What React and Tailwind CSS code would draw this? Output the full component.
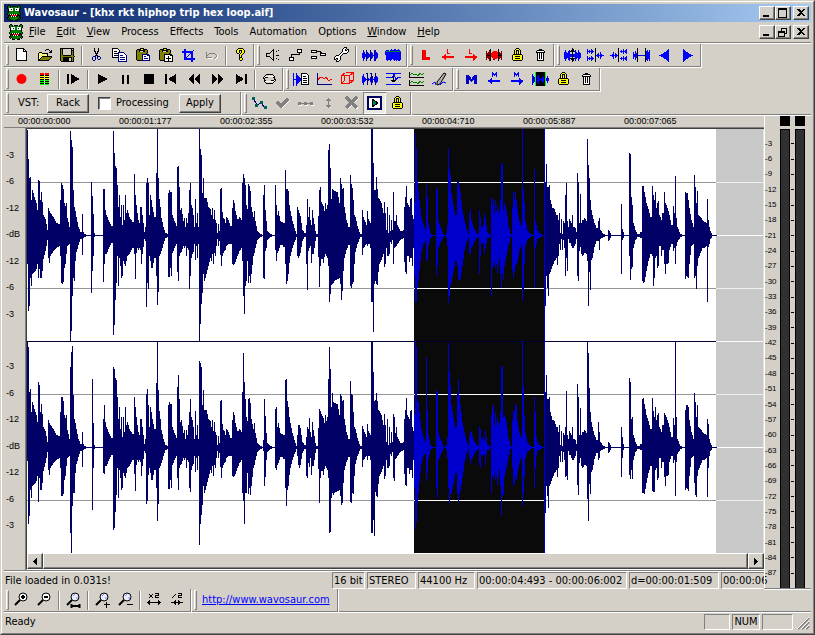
const PALETTE = {
  k: '#000000',
  w: '#ffffff',
  y: '#ffff00',
  o: '#808000',
  b: '#0000ff',
  n: '#000080',
  g: '#808080',
  r: '#ff0000',
  G: '#008000',
  L: '#00ff00',
  l: '#d4d0c8',
}

// columns of the wave form: x, height above the centre line, height below it
const LEFT =
  '27 105 28,28 76 75,29 57 70,30 58 42,31 35 50,32 45 38,34 38 36,36 32 33,37 25 28,38 55 42,39 54 33,40 35 42,41 43 42,42 33 35,43 20 23,45 16 15,47 5 4,48 27 22,49 24 27,50 22 20,53 18 15,56 12 12,59 11 10,60 35 20,61 52 47,62 50 48,63 46 46,64 32 32,65 29 28,66 32 18,67 17 10,69 8 8,70 104 106,71 95 95,72 88 60,73 45 42,74 28 45,75 24 25,76 18 16,78 8 9,80 3 3,82 21 19,83 3 2,84 1 1,86 0 0,' +
  '91 53 57,92 39 35,93 21 20,94 2 1,95 0 0,103 46 46,104 46 28,105 25 18,106 20 18,108 15 13,111 9 7,113 104 99,114 82 89,115 69 64,116 67 47,117 50 20,118 28 50,119 40 22,120 18 30,121 30 42,122 10 40,123 30 25,124 15 28,125 40 30,126 22 25,127 25 20,129 18 18,132 13 12,134 61 18,135 40 43,136 30 17,137 22 12,138 15 14,139 12 12,140 28 14,141 28 28,142 20 18,144 3 3,145 8 5,146 52 71,147 57 47,148 52 53,149 20 20,150 40 25,151 35 32,152 28 32,154 18 22,156 62 40,157 107 69,158 57 56,159 36 20,160 28 18,161 17 15,163 8 8,165 2 2,167 1 1,' +
  '168 42 41,169 45 41,170 43 32,171 43 40,172 20 17,174 14 12,176 9 8,177 68 36,178 69 45,179 48 20,180 25 17,181 27 16,183 14 10,184 17 12,185 8 10,186 17 20,187 12 12,188 22 14,189 45 53,190 52 40,191 30 22,192 27 18,193 20 16,194 8 8,195 36 24,196 12 10,197 22 22,198 8 8,199 106 107,200 86 88,201 80 68,202 42 57,203 57 38,204 37 45,206 37 38,208 28 30,210 26 22,211 20 25,212 27 18,213 16 28,214 25 17,215 15 20,216 12 10,217 2 3,218 11 10,219 4 5,' +
  '220 46 19,221 47 30,222 23 20,223 17 17,224 16 15,225 12 14,226 18 10,228 15 8,230 9 8,232 27 28,233 35 29,234 32 28,235 24 26,237 16 20,239 18 15,241 15 12,242 52 25,243 61 60,244 57 78,245 50 50,246 30 45,247 26 25,248 51 47,249 49 40,250 44 47,251 28 38,253 18 20,254 24 17,255 14 12,257 4 4,260 1 1,262 0 0,263 40 42,264 50 43,265 25 15,266 14 12,267 4 4,270 1 1,272 0 0,275 50 14,276 30 25,277 20 17,278 24 15,280 14 9,283 12 11,285 65 28,286 46 48,287 46 45,288 44 38,289 30 27,290 24 20,292 14 12,294 7 6,296 1 1,' +
  '297 28 20,298 25 22,300 19 17,302 5 5,304 2 1,306 10 28,307 36 54,308 18 15,309 28 12,310 15 10,311 10 27,312 25 18,313 17 18,315 4 5,316 1 1,318 19 21,319 45 51,320 48 30,321 33 23,323 29 27,324 24 21,325 32 18,326 26 20,327 30 22,328 85 30,329 91 66,330 67 58,331 36 49,332 46 48,334 44 45,337 43 43,339 32 42,340 57 48,341 51 64,342 46 55,343 47 35,344 28 22,346 15 14,348 8 9,350 60 50,351 51 52,352 47 48,353 35 46,354 20 28,355 18 16,357 9 8,359 3 3,360 1 1,' +
  '362 25 19,363 18 12,366 10 8,367 24 10,368 16 8,370 12 12,371 107 66,372 107 66,373 72 96,374 45 48,375 45 45,376 58 48,377 46 49,378 37 36,379 36 28,381 32 24,383 22 18,384 33 31,385 22 28,386 5 12,387 28 20,388 2 20,389 20 18,390 4 6,391 15 8,392 5 4,393 43 28,394 14 12,396 20 10,397 10 8,400 4 4,403 5 2,404 28 26,405 38 36,406 49 38,407 32 20,409 28 26,410 36 22,411 37 22,412 20 30,413 16 12,' +
  '414 33 40,415 102 66,416 87 66,417 54 52,418 45 45,419 35 34,421 18 16,423 10 8,425 5 5,426 50 24,427 38 25,428 12 10,430 2 2,432 0 0,436 47 40,437 45 30,438 14 12,440 8 7,443 1 1,444 0 0,446 2 2,447 10 10,448 87 67,449 66 60,450 60 50,451 42 46,453 30 36,455 20 25,457 54 30,458 53 44,460 42 43,462 25 30,464 15 15,466 6 6,468 1 1,469 22 18,470 26 18,471 15 12,473 8 8,476 2 2,478 1 1,479 25 38,480 18 20,481 8 7,483 10 8,484 22 18,485 17 12,487 3 2,489 1 1,490 0 0,' +
  '491 37 60,492 30 32,493 36 30,494 22 26,495 35 32,496 24 28,497 30 37,499 22 22,500 35 38,501 72 52,502 71 38,503 25 44,504 32 30,506 25 20,508 10 10,510 1 1,512 28 35,513 43 42,514 36 36,515 43 30,517 26 26,519 14 15,521 9 9,522 107 65,523 46 53,524 32 28,525 14 10,527 5 4,530 1 1,532 0 0,534 66 52,535 14 12,537 5 3,540 1 1,542 0 0,545 53 70,546 71 40,547 48 52,548 48 60,549 50 38,550 35 36,552 27 30,554 26 25,556 20 22,557 20 29,558 15 20,559 22 8,560 2 14,561 16 3,562 1 14,563 14 4,564 12 12,' +
  '565 40 40,566 52 22,567 14 35,568 8 3,569 16 7,571 12 10,572 20 12,573 8 12,575 7 8,576 3 3,577 62 40,578 53 45,579 12 15,580 41 11,581 12 18,582 15 20,584 17 17,586 14 18,587 96 25,588 70 70,589 57 36,590 35 54,591 25 24,592 20 22,594 12 11,596 7 5,598 14 5,599 17 14,600 5 3,603 1 1,605 0 0,608 5 5,609 4 4,611 0 0,621 31 38,622 6 4,624 0 0,629 82 20,630 81 44,631 38 33,632 30 31,633 12 12,635 5 4,637 1 1,640 3 2,' +
  '642 49 45,643 49 47,644 43 46,646 32 35,648 26 25,650 18 18,652 49 20,653 40 50,654 35 42,655 43 22,656 27 20,657 32 32,658 34 30,659 20 10,661 15 20,662 22 14,664 43 28,665 32 38,666 30 28,668 24 27,669 20 14,671 10 8,673 29 15,674 22 12,675 59 28,676 17 10,677 8 6,680 1 1,682 0 0,685 43 43,686 42 40,687 42 41,688 35 42,689 27 28,691 15 10,693 8 8,694 60 42,695 48 40,696 32 53,697 44 30,698 20 22,700 18 17,702 15 12,704 13 12,706 12 10,707 36 66,708 15 11,709 8 8,710 4 3,712 0 0,716 0 0'

// the right channel differs from the left one mostly at the peaks
const RIGHT =
  '27 105 13,28 100 76,29 55 68,38 65 54,39 62 30,61 50 48,70 80 85,71 95 106,72 101 58,73 52 45,82 15 19,91 0 0,92 68 62,93 24 20,103 28 25,104 42 26,113 80 82,114 78 80,134 50 26,146 53 56,147 58 53,148 42 27,156 64 40,157 106 73,177 60 30,178 72 42,189 35 40,190 48 44,199 86 97,200 84 76,201 80 67,242 55 45,243 94 53,244 65 76,245 48 45,248 48 46,263 7 3,264 48 38,265 31 29,275 38 20,276 40 22,285 67 40,286 68 58,287 46 42,288 40 38,297 12 8,298 22 17,307 20 30,309 29 19,319 38 55,320 36 30,' +
  '328 68 30,329 100 85,330 78 84,331 40 50,332 54 45,340 53 48,341 51 57,350 66 54,351 53 55,352 52 45,362 21 19,367 23 12,371 106 85,372 106 85,373 75 72,374 46 88,375 47 44,376 54 48,393 33 30,394 30 33,405 37 37,406 49 38,415 107 81,416 100 74,417 46 54,426 90 33,427 37 25,436 57 40,437 55 50,448 104 40,449 75 55,450 61 46,457 54 46,458 68 54,459 52 46,469 10 10,470 16 16,479 21 17,484 6 6,485 17 17,491 32 45,492 40 28,493 42 31,501 80 68,502 81 47,503 30 47,512 27 20,513 36 38,516 42 32,522 107 58,523 61 46,534 50 40,535 35 20,' +
  '545 55 65,546 72 38,547 48 48,548 48 60,565 20 29,566 56 28,567 12 32,577 63 37,578 50 47,580 39 10,587 107 51,588 94 73,589 59 36,590 35 46,598 25 12,599 15 10,621 20 29,622 10 10,629 69 27,630 65 31,631 28 22,642 48 45,643 49 45,652 49 43,653 36 44,654 30 44,655 40 22,664 34 29,675 107 48,676 30 14,685 37 42,688 40 43,694 54 35,695 45 47,696 30 49,697 42 28,707 28 49,708 23 20'

const SELECTION = [414, 545]

function parse(text) {
  return text.split(',').map((item) => item.split(' ').map(Number))
}

// one [x, up, down] for every column, falling evenly between two points
function columns(points) {
  const out = []
  points.forEach(([x, up, down], i) => {
    const next = points[i + 1] || [x + 1, 0, 0]
    const span = next[0] - x
    for (let n = 0; n < span; n++) {
      const u = next[1] < up ? up + ((next[1] - up) * n) / span : up
      const d = next[2] < down ? down + ((next[2] - down) * n) / span : down
      out.push([x + n, Math.round(u), Math.round(d)])
    }
  })
  return out
}

const left = columns(parse(LEFT))
const peaks = new Map(parse(RIGHT).map((p) => [p[0], p]))
const right = left.map((c) => peaks.get(c[0]) || c)

function wavePath(cols, centre, from, to) {
  return cols
    .filter(([x]) => x >= from && x < to)
    .map(([x, up, down]) => `M${x} ${centre - Math.min(up, 106)}h1V${centre + Math.min(down, 105) + 1}h-1z`)
    .join('')
}

function WaveForm() {
  const [start, end] = SELECTION
  return (
    <svg
      viewBox="27 0 737 424"
      preserveAspectRatio="none"
      shapeRendering="crispEdges"
      className="block w-full min-h-0 flex-1"
      role="img"
      aria-label="Stereo wave form"
    >
      <rect x="27" y="0" width="690" height="424" fill="#fff" />
      <rect x="716" y="0" width="47" height="424" fill="#c8c8c8" />
      <rect x="763" y="0" width="1" height="424" fill="#e4e2dc" />
      <rect x={start} y="0" width={end - start} height="424" fill="#0a0a0a" />
      {[53, 159, 265, 371].map((y) => (
        <g key={y}>
          <rect x="27" y={y} width="689" height="1" fill="#969696" />
          <rect x={start} y={y} width={end - start} height="1" fill="#fff" />
          <rect x="716" y={y} width="47" height="1" fill="#f0f0f0" />
        </g>
      ))}
      {[106, 212, 318].map((y) => (
        <rect key={y} x="716" y={y} width="47" height="1" fill="#fff" />
      ))}
      <rect x="27" y="212" width="689" height="1" fill="#000033" />
      {[[left, 106], [right, 318]].map(([cols, centre]) => (
        <g key={centre}>
          <path d={wavePath(cols, centre, 27, start)} fill="#000066" />
          <path d={wavePath(cols, centre, start, end)} fill="#0000cc" />
          <path d={wavePath(cols, centre, end, 718)} fill="#000066" />
        </g>
      ))}
      <rect x="544" y="0" width="1" height="424" fill="#0000cc" />
    </svg>
  )
}

// small bitmap icon, one character for each pixel
function Pixels({ rows }) {
  const width = Math.max(...rows.map((r) => r.length))
  const w = width + (width % 2 ? 0 : 1)
  const h = rows.length + (rows.length % 2)
  return (
    <svg width={w} height={h} viewBox={`0 0 ${w} ${h}`} shapeRendering="crispEdges" className="block shrink-0" aria-hidden="true">
      {rows.map((row, y) =>
        [...row].map((c, x) => (PALETTE[c] ? <rect key={x + '-' + y} x={x} y={y} width="1" height="1" fill={PALETTE[c]} /> : null)),
      )}
    </svg>
  )
}

function Icon({ children, smooth }) {
  return (
    <svg width="17" height="16" viewBox="0 0 17 16" fill="none" shapeRendering={smooth ? 'auto' : 'crispEdges'} className="block shrink-0" aria-hidden="true">
      {children}
    </svg>
  )
}

// mirrored bars round a centre line
function Bars({ x = 0, y = 8, h, color = '#0000ff' }) {
  return h.map((v, i) => <rect key={i} x={x + i} y={y - v} width="1" height={v * 2 + 1} fill={color} />)
}

const dino = [
  '..kk........kk..',
  '.kGGk.kkkk.kGGk.',
  '.kGGkGGGGGGkGGk.',
  '.kGwwwwGGwwwwGk.',
  '..kwwkwGGwkwwk..',
  '..kwwwwGGwwwwk..',
  '..kGGGGGGGGGGk..',
  '..kGGGGGGGGGGk..',
  '.kGGGGGGGGGGGGk.',
  '.kGkwkwkwkwkkGk.',
  '..kkkrrrrrrkkk..',
  '..kGkwkwkwkkGk..',
  '.kkGGGGGGGGGGkk.',
  '.kGkGGGGGGGGkGk.',
  '..k.kGGGGGGk.k..',
  '....kkk..kkk....',
]

const lock = [
  '....kkk....',
  '...kyyyk...',
  '..kykkkyk..',
  '..kyk.kyk..',
  '..kyk.kyk..',
  '..kyk.kyk..',
  '.kkkkkkkkk.',
  'kyyyyyyyyyk',
  'kyykkkkkyyk',
  'kyyyyyyyyyk',
  'kyykkkkkyyk',
  'kyyyyyyyyyk',
  '.kkkkkkkkk.',
]

const trash = [
  '...kkk...',
  '.kkkkkkk.',
  'kwwwwwwwk',
  'kkkkkkkkk',
  '.kwkwkwk.',
  '.kwkwkwk.',
  '.kwkwkwk.',
  '.kwkwkwk.',
  '.kwkwkwk.',
  '.kwkwkwk.',
  '.kwwwwwk.',
  '.kkkkkkk.',
]

const clip = [
  '.....kkkk......',
  '..kkkkyykkkk...',
  '.kookkkkkkook..',
  '.kooklllkkook..',
  '.kooooooooook..',
  '.koooooooooko..',
]

const icons = {
  newFile: <Icon><path d="M3.5 1.5h7l3 3v9h-10z" fill="#fff" stroke="#000" /><path d="M10.5 1.5v3h3" stroke="#000" /></Icon>,
  open: (
    <Pixels
      rows={[
        '.........kkk...',
        '........k...k.k',
        '.............kk',
        '..kkk.......kkk',
        '.kywykkkkkk....',
        '.kwywywywyk....',
        '.kywywywywk....',
        '.kwywkkkkkkkkkk',
        '.kywkoooooooook',
        '.kwkoooooooook.',
        '.kkoooooooook..',
        '.kkkkkkkkkkk...',
      ]}
    />
  ),
  save: (
    <Pixels
      rows={[
        'kkkkkkkkkkkkkk.',
        'kokllllllllklk.',
        'kokllllllllkkk.',
        'kokllllllllkok.',
        'kokllllllllkok.',
        'kokllllllllkok.',
        'kokllllllllkok.',
        'kookkkkkkkkook.',
        'koooooooooooook',
        'kookkkkkkkkkok.',
        'kookkkkkkllkok.',
        'kookkkkkkllkok.',
        'kookkkkkkllkok.',
        '.kkkkkkkkkkkkk.',
      ]}
    />
  ),
  cut: (
    <Pixels
      rows={[
        '..k...k..',
        '..k...k..',
        '..k...k..',
        '..kk.kk..',
        '...k.k...',
        '...kkk...',
        '....k....',
        '...nkn...',
        '.nnn.nnn.',
        'n..n.n..n',
        'n..n.n..n',
        'n..n..nn.',
        '.nn......',
      ]}
    />
  ),
  copy: (
    <Icon>
      <path d="M1.5 1.5h5l2 2v7h-7z" fill="#fff" stroke="#000" />
      <path d="M3 4.5h3M3 6.5h4M3 8.5h4" stroke="#000" />
      <path d="M7.5 5.5h5l3 3v6h-8z" fill="#fff" stroke="#000080" />
      <path d="M9 8.5h3M9 10.5h5M9 12.5h5" stroke="#000080" />
    </Icon>
  ),
  paste: (
    <Pixels
      rows={[
        ...clip,
        '.kooooonnnnnnn.',
        '.kooooonwwwwnnn',
        '.kooooonwnnwwwn',
        '.kooooonwwwwwwn',
        '.kooooonwnnnnwn',
        '.kooooonwwwwwwn',
        '..kkkkknnnnnnnn',
      ]}
    />
  ),
  pasteMix: (
    <Pixels
      rows={[
        ...clip,
        '.kooookkkkkkkk.',
        '.kooookwwwwwkkk',
        '.kooookwwwkwwwk',
        '.kooookwwwkwwwk',
        '.kooookwkkkkkwk',
        '.kooookwwwkwwwk',
        '..kkkkkwwwkwwwk',
        '......kkkkkkkkk',
      ]}
    />
  ),
  crop: <Icon><path d="M5 2v10h10M2 5h10v10" stroke="#0000ff" strokeWidth="2" /><path d="M4 13L14 3" stroke="#0000ff" /></Icon>,
  undo: <Icon><path d="M3.5 5v5h5M4 9l3-3h4l2 2v2l-2 2" stroke="#808080" /><path d="M4.5 11.5h5M12 13l2-2v-3" stroke="#fff" /></Icon>,
  help: (
    <Pixels
      rows={[
        '..kkkkk..',
        '.kyyyyyk.',
        'kyykkkyyk',
        'kyyk.kyyk',
        'kyyk.kyyk',
        '.kk.kyyk.',
        '...kyyk..',
        '...kyk...',
        '...kyk...',
        '...kkk...',
        '...kyyk..',
        '...kyyk..',
        '....kk...',
      ]}
    />
  ),
  speaker: <Icon><path d="M2.5 6.5h3l4-4v11l-4-4h-3z" fill="#d4d0c8" stroke="#000" /><path d="M12 4.5h1M14 3.5h1M12 8.5h3M12 11.5h1M14 12.5h1" stroke="#000" /></Icon>,
  cable: <Icon><path d="M4.5 11V7.5h8V4" stroke="#000" /><path d="M2.5 10.5h4v3h-4zM10.5 2.5h4v3h-4z" fill="#fff" stroke="#000" /></Icon>,
  routing: <Icon><path d="M1.5 3.5h5v2h-5zM1.5 9.5h5v2h-5zM10.5 6.5h5v2h-5z" fill="#fff" stroke="#000" /><path d="M7 4.5h3l2 2" stroke="#000" /></Icon>,
  wrench: (
    <Pixels
      rows={[
        '..........kkk..',
        '.........kwwk..',
        '........kwwk.kk',
        '........kwwkkwk',
        '........kwwwwwk',
        '.......kwwwwwk.',
        '......kwwkkkk..',
        '.....kwwk......',
        '..kkkwwk.......',
        '.kwwwwk........',
        'kwwwwwk........',
        'kwkkwwk........',
        'kk.kwwk........',
        '..kwwk.........',
        '..kkk..........',
      ]}
    />
  ),
  wave: <Icon><Bars h={[2, 5, 3, 1, 0, 3, 2, 1, 0, 3, 2, 0, 1, 5, 3, 2]} /><path d="M4.5 3v11M8.5 3v11M12.5 3v11" stroke="#000080" /></Icon>,
  waveFull: (
    <Icon>
      <path d="M0 5l1-2h2l1 1 2-2 2 1 2-1 2 1 1-1 2 1 1 2v7l-2 3-1-3-1 2-2-1-1 1-2-2-2 2-1-2-2 2-1-3z" fill="#0000ff" />
      <path d="M1 4.5h15" stroke="#008040" />
    </Icon>
  ),
  loopL: <Icon><path d="M6 3h3v7h4v3H6z" fill="#ff0000" /><path d="M5.5 3v10" stroke="#c00000" /></Icon>,
  loopPrev: <Icon><path d="M7.5 2v4H10" stroke="#ff0000" /><path d="M2 10h12" stroke="#ff0000" strokeWidth="2" /><path d="M6 7l-4 3 4 4z" fill="#ff0000" /></Icon>,
  loopNext: <Icon><path d="M6.5 2v4H9" stroke="#ff0000" /><path d="M2 10h12" stroke="#ff0000" strokeWidth="2" /><path d="M10 7l4 3-4 4z" fill="#ff0000" /></Icon>,
  loopWave: (
    <Icon>
      <Bars color="#800000" h={[4, 2, 3, 5, 0, 1, 2, 4, 4, 2, 1, 0, 5, 3, 2, 4]} />
      <path d="M5 6l2-2h3l2 2v4l-2 2H7l-2-2z" fill="#ff0000" />
      <path d="M4.5 2v12M12.5 2v12M1 8.5h4M12 8.5h4" stroke="#000" />
    </Icon>
  ),
  lock: <Pixels rows={lock} />,
  trash: <Pixels rows={trash} />,
  stretch: <Icon><Bars h={[3, 5, 3, 2, 4, 5, 1, 1, 0, 1, 1, 5, 3, 2, 5, 3, 2]} /><path d="M8.5 1v14M6 4.5h5M6 11.5h5M7 3.5h3M7 12.5h3M7.5 2.5h2M7.5 13.5h2" stroke="#000" /></Icon>,
  split: <Icon><Bars y={4} h={[2, 0, 1, 0, 2, 1, 0]} /><Bars y={11} h={[2, 0, 1, 0, 2, 1, 0]} /><Bars x={9} h={[0, 1, 2, 0, 3, 1, 0, 0]} /><path d="M8.5 1v14" stroke="#000" /></Icon>,
  join: <Icon><Bars h={[0, 0, 1, 3, 0, 2, 1, 0]} /><Bars x={10} y={4} h={[0, 1, 0, 2, 0, 1, 2]} /><Bars x={10} y={11} h={[0, 1, 0, 2, 0, 1, 2]} /><path d="M8.5 1v14" stroke="#000" /></Icon>,
  silence: <Icon><Bars h={[3, 1, 4, 2]} /><Bars x={13} h={[4, 5, 3, 5]} /><path d="M4 8.5h9" stroke="#0000ff" /><path d="M4.5 1v14M12.5 1v14" stroke="#000" /></Icon>,
  fadeIn: <Icon><Bars x={3} h={[0, 0, 1, 1, 2, 3, 3, 4, 5, 6]} /></Icon>,
  fadeOut: <Icon><Bars x={4} h={[6, 5, 4, 3, 3, 2, 1, 1, 0, 0]} /></Icon>,
  record: <Icon smooth><circle cx="8.5" cy="8" r="5" fill="#ff0000" /></Icon>,
  meter: (
    <Pixels
      rows={[
        'rrrr.rrrr',
        'rrrr.rrrr',
        'kkkk.kkkk',
        'yyyy.yyyy',
        'kkkk.kkkk',
        'yyyy.yyyy',
        'kkkk.kkkk',
        'LLLL.LLLL',
        'kkkk.kkkk',
        'LLLL.LLLL',
        'kkkk.kkkk',
        'LLLL.LLLL',
      ]}
    />
  ),
  playBar: <Icon><path d="M3 3v10" stroke="#000" strokeWidth="2" /><path d="M6 3l9 5-9 5z" fill="#000" /></Icon>,
  play: <Icon><path d="M4 3l10 5-10 5z" fill="#000" /></Icon>,
  pause: <Icon><path d="M6 4v9M11 4v9" stroke="#000" strokeWidth="2" /></Icon>,
  stop: <Icon><path d="M4 3h10v10H4z" fill="#000" /></Icon>,
  first: <Icon><path d="M3 3v10" stroke="#000" strokeWidth="2" /><path d="M5 8l8-5v10z" fill="#000" /></Icon>,
  rewind: <Icon><path d="M2 8l6-5v10zM8 8l6-5v10z" fill="#000" /></Icon>,
  forward: <Icon><path d="M3 3l6 5-6 5zM9 3l6 5-6 5z" fill="#000" /></Icon>,
  last: <Icon><path d="M4 3l8 5-8 5z" fill="#000" /><path d="M14 3v10" stroke="#000" strokeWidth="2" /></Icon>,
  loop: (
    <Pixels
      rows={[
        '...kkkkkkk...',
        '..k.......k..',
        '.kwwwwwwwwwk.',
        'kwkkk.....kk.',
        'kk.........k.',
        '.k.........kk',
        '.kk.....kkkwk',
        '.kwwwwwwwwwk.',
        '..k.......k..',
        '...kkkkkkk...',
      ]}
    />
  ),
  waveText: <Icon><Bars h={[6, 0, 0, 6, 4, 3, 2, 1]} /><path d="M8.5 2.5h5l2 2v9h-7z" fill="#fff" stroke="#000" /><path d="M10 5.5h3M10 7.5h4M10 9.5h4M10 11.5h4" stroke="#000" /></Icon>,
  chart: <Icon><path d="M1.5 2v11.5H16" stroke="#000080" /><path d="M2 9l2-3h2l2 2 2-2 2 3h2l2-1" stroke="#ff0000" /></Icon>,
  cube: <Icon><path d="M2.5 4.5h8v8h-8zM6.5 1.5h8v8h-4M2.500 4.500l4-3M10.500 4.500l4-3M10.500 12.500l4-3M5 4v6l-2 2" stroke="#ff0000" /></Icon>,
  gate: <Icon><Bars h={[3, 5, 2, 1, 0, 3, 1, 0, 2, 1, 3, 0, 2, 5, 3, 2]} /><path d="M5.5 2v12M4 2.5h2M9.5 2v12M8 2.5h2M13.5 2v12" stroke="#000080" /></Icon>,
  offset: <Icon><path d="M1 2.5h15M1 13.5h15" stroke="#0000ff" /><path d="M1 6.5h6l2-3 2 5 2-2h3" stroke="#0000ff" /><path d="M8.5 5v6M6 9.5h5M7 10.5h3" stroke="#000" /></Icon>,
  envelopes: <Icon><path d="M1.5 1v6M1 6.5h15M1.5 9v6M1 14.5h15" stroke="#000" /><path d="M2 4l2-2 2 2 2-1 2 2 2-3 2 2 2-2M2 12l2-2 2 2 2-1 2 2 2-3 2 2 2-2" stroke="#008000" /></Icon>,
  pencil: <Icon smooth><path d="M6 11L13 2l2 1-6 10-3 1z" fill="#b0b0b0" stroke="#000" /><path d="M1 13l3-2 1 3M9 14l3-3 3 1" stroke="#0000ff" /></Icon>,
  markerM: <Icon><path d="M3 4h3l2.500 4L11 4h3v9h-3V8l-2 3H8L6 8v5H3z" fill="#0000d0" /></Icon>,
  markerPrev: <Icon><path d="M6.5 6V2l2 2 2-2v4" stroke="#0000ff" /><path d="M2 10h12" stroke="#0000ff" strokeWidth="2" /><path d="M6 7l-4 3 4 4z" fill="#0000ff" /></Icon>,
  markerNext: <Icon><path d="M5.5 6V2l2 2 2-2v4" stroke="#0000ff" /><path d="M2 10h12" stroke="#0000ff" strokeWidth="2" /><path d="M10 7l4 3-4 4z" fill="#0000ff" /></Icon>,
  markerZone: <Icon><Bars h={[5, 3, 2, 2]} /><path d="M4 1h10v14H4z" fill="#000" /><path d="M3.5 1v14M13.5 1v14" stroke="#00ff00" /><Bars x={5} h={[3, 4, 1, 0, 1, 3, 2, 0]} /><Bars x={14} h={[1, 3, 1]} /></Icon>,
  nodes: <Icon><path d="M2 3l4 7 4-2 4 5" stroke="#000080" /><path d="M1 2h3v3H1zM4 9h3v3H4zM9 6h3v3H9zM13 11h3v3h-3z" fill="#006060" /></Icon>,
  tick: <Icon><path d="M4 8l4 4 7-7" stroke="#fff" strokeWidth="2" /><path d="M3 7l4 4 7-7" stroke="#808080" strokeWidth="3" /></Icon>,
  dots: <Icon><path d="M1 8.5h15" stroke="#808080" /><path d="M1 7h3v3H1zM7 7h3v3H7zM13 7h3v3h-3z" fill="#808080" /><path d="M2 10.5h3M8 10.5h3M14 10.5h3" stroke="#fff" /></Icon>,
  upDown: <Icon><path d="M8.5 3v10M6 5.5h5M7 4.5h3M6 10.5h5M7 11.5h3" stroke="#808080" /></Icon>,
  cross: <Icon><path d="M4 3l11 11M15 3L4 14" stroke="#fff" strokeWidth="2" /><path d="M3 2l11 11M14 2L3 13" stroke="#808080" strokeWidth="3" /></Icon>,
  bypass: <Icon><path d="M2 2h13v12H2z" fill="#fff" stroke="#000060" strokeWidth="2" /><path d="M6 4l6 4-6 4z" fill="#008060" stroke="#000" /></Icon>,
}

function Lens({ x = 10, y = 5, blue, children }) {
  return (
    <svg width="17" height="16" viewBox="0 0 17 16" fill="none" className="block" aria-hidden="true">
      <path d={`M${x - 3} ${y + 3}L${x - 8} ${y + 8}`} stroke="#000" strokeWidth="2" />
      <circle cx={x} cy={y} r="4" fill={blue ? '#e8ecff' : '#fff'} stroke="#000" />
      {blue && <path d={`M${x - 2} ${y - 1}l2-2M${x + 2} ${y}v2`} stroke="#8080ff" />}
      {children}
    </svg>
  )
}

const zoomIcons = {
  zoomIn: <Lens><path d="M8 5h4M10 3v4" stroke="#000" strokeWidth="2" /></Lens>,
  zoomOut: <Lens><path d="M8 5h4" stroke="#000" strokeWidth="2" /></Lens>,
  zoomSel: <Lens blue><path d="M7 14h7M6.5 12v4M14.5 12v4" stroke="#000" strokeWidth="2" /></Lens>,
  zoomVIn: <Lens blue><path d="M10 12.5h6M12.5 10v6" stroke="#000" /></Lens>,
  zoomVOut: <Lens blue><path d="M10 12.5h6" stroke="#000" /></Lens>,
  times2: (
    <Icon>
      <path d="M3 2l4 4M7 2L3 6M9 1.5h3.500v2h-3v2H13" stroke="#000" />
      <path d="M1 10.5h14M3.5 8v5M2.5 9v3M12.5 8v5M13.5 9v3" stroke="#000" />
    </Icon>
  ),
  half: (
    <Icon>
      <path d="M3 6l4-4M9 1.5h3.500v2h-3v2H13" stroke="#000" />
      <path d="M2 10.5h12M6.5 8v5M5.5 9v3M9.5 8v5M10.5 9v3" stroke="#000" />
    </Icon>
  ),
}

const row1 = [
  [['newFile', 'New'], ['open', 'Open'], ['save', 'Save'], null, ['cut', 'Cut'], ['copy', 'Copy'], ['paste', 'Paste'], ['pasteMix', 'Paste mix'], ['crop', 'Crop'], ['undo', 'Undo'], null, ['help', 'Help']],
  [['speaker', 'Audio device'], ['cable', 'MIDI'], ['routing', 'Routing'], ['wrench', 'Configuration'], null, ['wave', 'Zero crossing'], ['waveFull', 'Select all']],
  [['loopL', 'Create loop'], ['loopPrev', 'Previous loop'], ['loopNext', 'Next loop'], ['loopWave', 'Loop selection'], ['lock', 'Lock loops'], ['trash', 'Delete loops']],
  [['stretch', 'Normalize'], ['split', 'Stereo to mono'], ['join', 'Mono to stereo'], ['silence', 'Silence'], ['fadeIn', 'Fade in'], ['fadeOut', 'Fade out']],
]

const row2 = [
  [['record', 'Record'], ['meter', 'Input monitor'], null, ['playBar', 'Play from cursor'], null, ['play', 'Play'], ['pause', 'Pause'], ['stop', 'Stop'], ['first', 'Go to start'], ['rewind', 'Rewind'], ['forward', 'Forward'], ['last', 'Go to end'], null, ['loop', 'Loop']],
  [['waveText', 'Statistics'], ['chart', 'Spectrum'], ['cube', '3D spectrum'], ['gate', 'Slices'], ['offset', 'DC offset'], ['envelopes', 'Envelopes'], ['pencil', 'Draw']],
  [['markerM', 'Add marker'], ['markerPrev', 'Previous marker'], ['markerNext', 'Next marker'], ['markerZone', 'Select between markers'], ['lock', 'Lock markers'], ['trash', 'Delete markers']],
]

const row3 = [['nodes', 'Edit envelope'], ['tick', 'Apply envelope'], ['dots', 'Reset envelope'], ['upDown', 'Flip'], ['cross', 'Remove'], ['bypass', 'Play through', true], ['lock', 'Lock envelope']]

const zoomRow = [['zoomIn', 'Zoom in'], ['zoomOut', 'Zoom out'], null, ['zoomSel', 'Zoom selection'], null, ['zoomVIn', 'Vertical zoom in'], ['zoomVOut', 'Vertical zoom out'], null, ['times2', 'Double width'], ['half', 'Half width']]

const menus = [['F', 'ile'], ['E', 'dit'], ['V', 'iew'], ['', 'Process'], ['', 'Effects'], ['', 'Tools'], ['', 'Automation'], ['', 'Options'], ['W', 'indow'], ['H', 'elp']]

const times = ['00:00:00:000', '00:00:01:177', '00:00:02:355', '00:00:03:532', '00:00:04:710', '00:00:05:887', '00:00:07:065']

const levels = Array.from({ length: 29 }, (_, i) => -3 * (i + 1))

const raised = 'border border-t-white border-l-white border-r-[#404040] border-b-[#404040] bg-[#d4d0c8] shadow-[inset_-1px_-1px_0_#808080]'
const sunken = 'border border-t-[#808080] border-l-[#808080] border-r-white border-b-white'

function Band({ children, className = '' }) {
  return (
    <div className={`mr-px flex h-[23px] shrink-0 items-center border-r border-b border-[#808080] pr-px shadow-[1px_1px_0_#fff] ${className}`}>
      <div className="mr-px ml-0.5 h-5 w-[3px] shrink-0 border border-t-white border-l-white border-r-[#808080] border-b-[#808080]" />
      {children}
    </div>
  )
}

function Tools({ items }) {
  return items.map((item, i) => {
    if (!item) {
      return <div key={i} className="mx-0.5 h-[19px] w-0.5 shrink-0 border-r border-l border-l-[#808080] border-r-white" />
    }
    const [name, label, pressed] = item
    return (
      <button
        key={i}
        type="button"
        aria-label={label}
        className={`flex h-[22px] w-[23px] shrink-0 items-center justify-center ${pressed ? 'bg-[#ebe9e4] shadow-[inset_1px_1px_0_#808080,inset_-1px_-1px_0_#fff]' : ''}`}
      >
        {icons[name] || zoomIcons[name]}
      </button>
    )
  })
}

function WindowButtons({ restore }) {
  const box = `flex h-[14px] w-4 items-center justify-center ${raised}`
  return (
    <div className="mr-0.5 ml-auto flex">
      <button type="button" aria-label="Minimize" className={box}>
        <svg width="10" height="10" shapeRendering="crispEdges"><path d="M1 7h6v2H1z" /></svg>
      </button>
      <button type="button" aria-label={restore ? 'Restore' : 'Maximize'} className={box}>
        <svg width="10" height="10" shapeRendering="crispEdges" fill="none" stroke="#000">
          {restore ? <path d="M3 1h6M3 1.500h6M3.500 1v3M8.500 1v5.500H6M.500 4v5.500h6V4M0 4.500h7M0 5.500h7" /> : <path d="M.500 1v8.500h8V1M0 .500h9M0 1.500h9" />}
        </svg>
      </button>
      <button type="button" aria-label="Close" className={`ml-0.5 ${box}`}>
        <svg width="10" height="10" shapeRendering="crispEdges"><path d="M1 1h2l2 2 2-2h2L6 4.500 9 8H7L5 6 3 8H1l3-3.500z" /></svg>
      </button>
    </div>
  )
}

function DbScale() {
  return (
    <div className="flex min-h-0 flex-1 flex-col py-[13px] pl-0.5">
      {['-3', '-6', '-12', '-dB', '-12', '-6', '-3'].map((t, i) => (
        <span key={i} className="flex flex-1 items-center">{t}</span>
      ))}
    </div>
  )
}

function Meter() {
  return (
    <div className="flex w-[10px] flex-col gap-[3px]">
      <div className="h-[10px] bg-black" />
      <div className="flex-1 border border-b-0 border-black bg-[#303030]" />
    </div>
  )
}

function Meters() {
  return (
    <div className="flex w-[47px] shrink-0 flex-col border-b border-[#808080] pr-[6px] shadow-[0_1px_0_#fff]">
      <div className="flex min-h-0 flex-1">
        <div className="flex w-4 flex-col border-l border-white pt-5 pb-[7px] font-['Liberation_Sans',sans-serif] text-[8px] leading-none">
          {levels.map((v) => (
            <span key={v} className="flex min-h-0 flex-1 items-center">{v}</span>
          ))}
        </div>
        <Meter />
        <div className="flex w-[5px] flex-col items-center pt-5 pb-[7px]">
          {levels.map((v) => (
            <span key={v} className="flex min-h-0 flex-1 items-center"><i className="block h-px w-[3px] bg-black" /></span>
          ))}
        </div>
        <Meter />
      </div>
    </div>
  )
}

function InfoCell({ children, className }) {
  return <span className={`shrink-0 whitespace-nowrap pl-px leading-[15px] ${sunken} ${className}`}>{children}</span>
}

export default function App() {
  return (
    <div className="h-screen cursor-default border border-t-[#d4d0c8] border-l-[#d4d0c8] border-r-[#404040] border-b-[#404040] bg-[#d4d0c8] font-['DejaVu_Sans_Condensed','DejaVu_Sans',sans-serif] text-[11px] text-black select-none">
      <div className="flex h-full flex-col border border-t-white border-l-white border-r-[#808080] border-b-[#808080] p-0.5">
        <header className="flex h-[18px] shrink-0 items-center bg-linear-to-r from-[#0a246a] to-[#a6caf0] pl-0.5">
          <Pixels rows={dino} />
          <h1 className="ml-px font-bold whitespace-nowrap text-white">Wavosaur - [khx rkt hiphop trip hex loop.aif]</h1>
          <WindowButtons />
        </header>

        <nav className="flex h-5 shrink-0 items-center pl-1">
          <Pixels rows={dino} />
          <div className="ml-1 flex gap-[11px]">
            {menus.map(([key, rest]) => (
              <button key={rest} type="button"><u>{key}</u>{rest}</button>
            ))}
          </div>
          <WindowButtons restore />
        </nav>

        <div className="shrink-0 border-t border-[#808080]">
          <div className="border-t border-white">
            <div className="flex h-6">
              {row1.map((items, i) => <Band key={i}><Tools items={items} /></Band>)}
            </div>
            <div className="flex h-6">
              {row2.map((items, i) => <Band key={i}><Tools items={items} /></Band>)}
            </div>
            <div className="flex h-6 border-b border-white">
              <div className="flex flex-1 border-b border-[#808080]">
                <Band className="w-[237px]">
                  <span className="ml-2 w-[29px]">VST:</span>
                  <button type="button" className={`h-[19px] w-[42px] ${raised}`}>Rack</button>
                  <label className="ml-[9px] flex w-[81px] items-center gap-[5px]">
                    <input type="checkbox" className="h-[13px] w-[13px] shrink-0 appearance-none border border-t-[#404040] border-l-[#404040] border-r-white border-b-white bg-white shadow-[inset_1px_1px_0_#808080]" />
                    Processing
                  </label>
                  <button type="button" className={`h-[19px] w-[42px] ${raised}`}>Apply</button>
                </Band>
                <Band><Tools items={row3} /></Band>
              </div>
            </div>
          </div>
        </div>

        <main className="flex min-h-0 flex-1">
          <div className="flex min-w-0 flex-1 flex-col">
            <div className="flex h-[11px] shrink-0 overflow-hidden pl-[14px] font-['Liberation_Sans',sans-serif] text-[9px] leading-[11px]">
              {times.map((t) => <span key={t} className="w-[101px] shrink-0">{t}</span>)}
            </div>
            <div className="flex min-h-0 flex-1 border-t border-[#808080]">
              <div className="flex w-[22px] shrink-0 flex-col pt-px pb-[18px] font-['Liberation_Sans',sans-serif] text-[9px] leading-none">
                <DbScale />
                <DbScale />
              </div>
              <div className="flex min-w-0 flex-1 flex-col border-t border-b border-l border-t-[#404040] border-l-[#404040] border-b-white shadow-[-1px_0_0_#808080]">
                <WaveForm />
                <div className="flex h-4 shrink-0">
                  <button type="button" aria-label="Scroll left" className={`flex w-4 items-center justify-center ${raised}`}>
                    <svg width="4" height="7" shapeRendering="crispEdges"><path d="M4 0v7L0 3.500z" /></svg>
                  </button>
                  <div className={`flex-1 ${raised}`} />
                  <button type="button" aria-label="Scroll right" className={`flex w-4 items-center justify-center ${raised}`}>
                    <svg width="4" height="7" shapeRendering="crispEdges"><path d="M0 0v7l4-3.500z" /></svg>
                  </button>
                </div>
              </div>
            </div>
            <div className="shrink-0 border-t border-[#808080]">
              <div className="flex h-[18px] gap-0.5 border-t border-white">
                <span className="min-w-0 flex-1 truncate pl-px leading-[17px]">File loaded in 0.031s!</span>
                <InfoCell className="w-[33px]">16 bit</InfoCell>
                <InfoCell className="w-[49px]">STEREO</InfoCell>
                <InfoCell className="w-[57px]">44100 Hz</InfoCell>
                <InfoCell className="w-[150px]">00:00:04:493 - 00:00:06:002</InfoCell>
                <InfoCell className="w-[90px]">d=00:00:01:509</InfoCell>
                <InfoCell className="w-[43px] border-r-0">00:00:06</InfoCell>
              </div>
            </div>
          </div>
          <Meters />
        </main>

        <div className="flex h-6 shrink-0 border-b border-white">
          <div className="flex flex-1 border-b border-[#808080]">
            <Band><Tools items={zoomRow} /></Band>
            <Band><a href="http://www.wavosaur.com" className="mr-[5px] ml-1 w-[129px] text-[#0000ff] underline">http://www.wavosaur.com</a></Band>
          </div>
        </div>

        <footer className="flex h-[18px] shrink-0 items-center pl-px">
          <span className="flex-1">Ready</span>
          <div className="flex h-4 gap-0.5">
            <span className={`w-[26px] ${sunken}`} />
            <span className={`w-7 text-center leading-[14px] ${sunken}`}>NUM</span>
            <span className={`w-[31px] ${sunken}`} />
          </div>
          <svg width="17" height="16" className="ml-px block" aria-hidden="true">
            <path d="M4 15L15 4M8 15l7-7M12 15l3-3" stroke="#808080" strokeWidth="2" />
            <path d="M3 15L15 3M7 15l8-8M11 15l4-4" stroke="#fff" />
          </svg>
        </footer>
      </div>
    </div>
  )
}
